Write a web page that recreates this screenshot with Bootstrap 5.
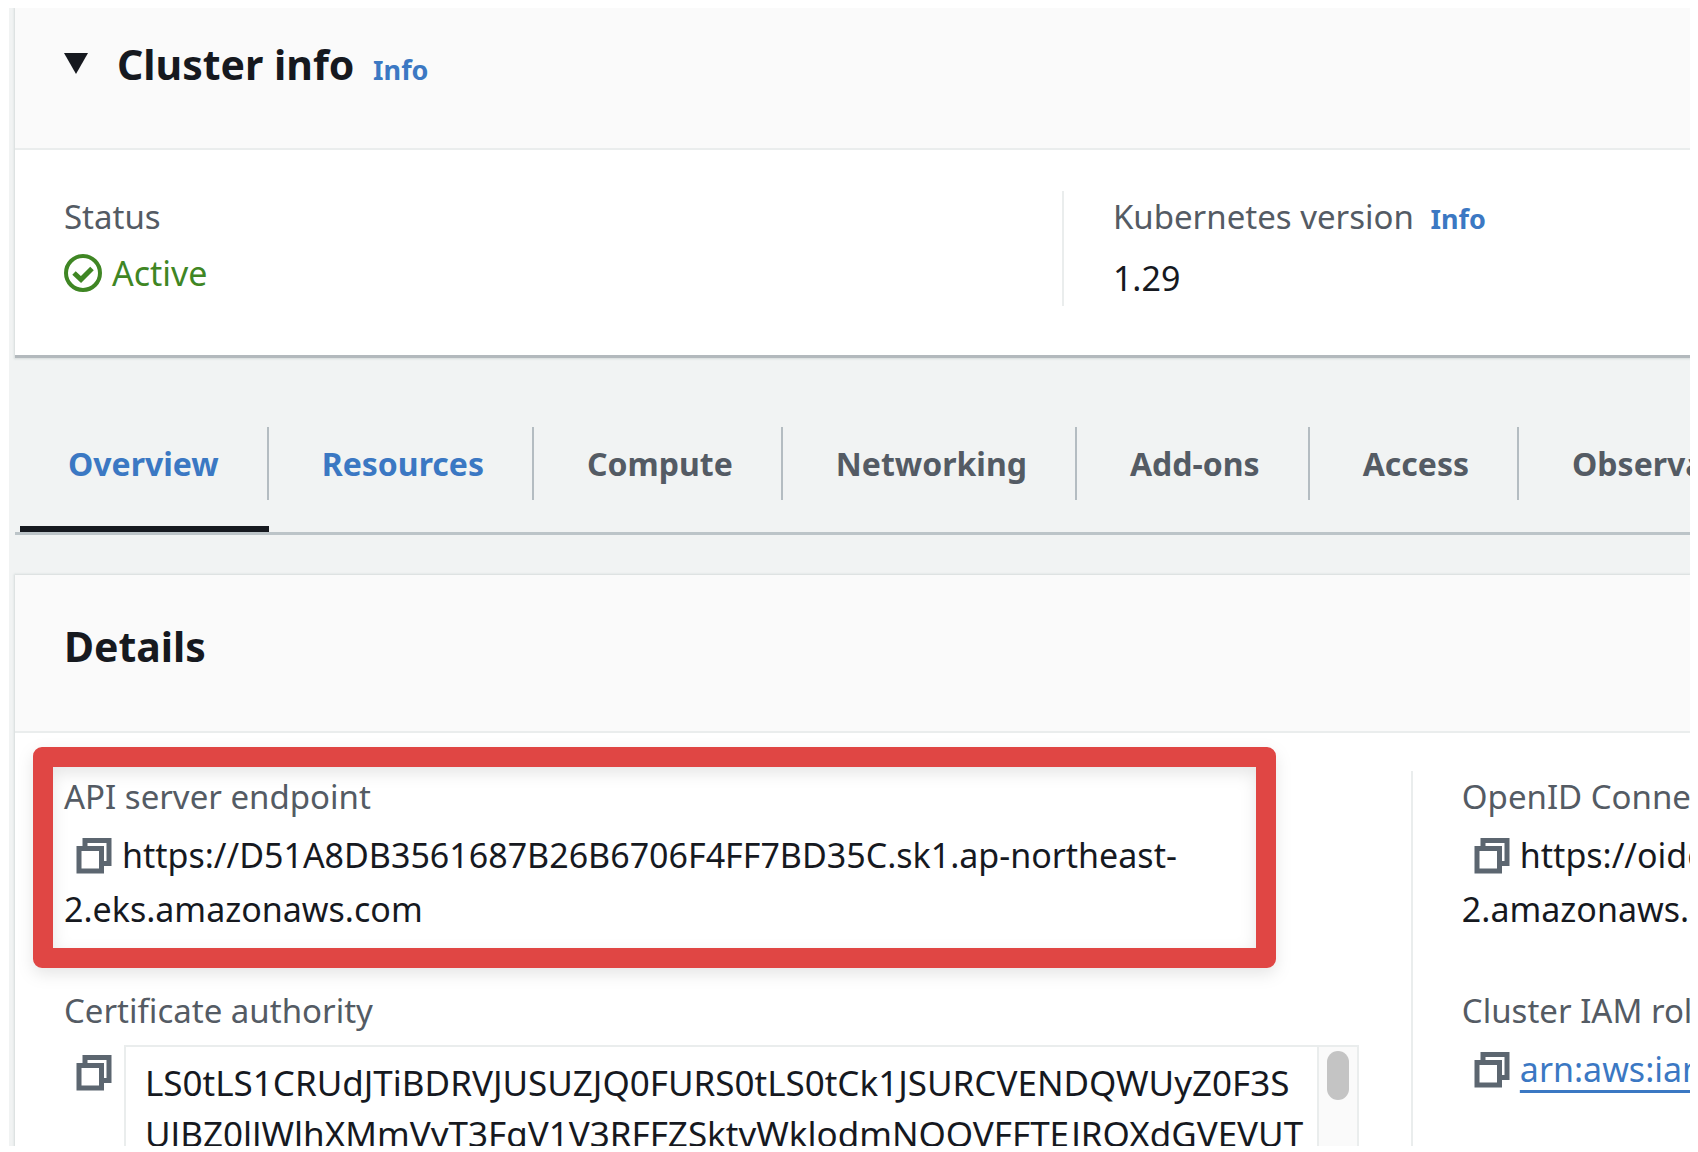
<!DOCTYPE html>
<html lang="en">
<head>
<meta charset="utf-8">
<meta name="viewport" content="width=device-width, initial-scale=1">
<title>Cluster info</title>
<link href="https://cdn.jsdelivr.net/npm/bootstrap@5.3.0/dist/css/bootstrap.min.css" rel="stylesheet">
<style>
  :root { --ink: #16191f; --muted: #545b64; --link: #3b78c3; --line: #eaeded; --ok: #3f8624; }
  body { font-family: "Noto Sans", "Open Sans", sans-serif; color: var(--ink); background: #fff; padding: 8px 8px 6px 9px; font-size: 34px; height: 100vh; overflow: hidden; }
  .console { background: #f1f3f3; height: 100%; overflow: hidden; padding-left: 6px; }
  .panel { background: #fff; box-shadow: 0 0 2px 1px #d5dbdb; }
  .panel-closed { border-bottom: 3px solid #b3b9bd; }
  .panel-head { background: #fafafa; border-bottom: 2px solid var(--line); padding: 28px 49px 56px; }
  .panel-head-lg { padding: 43px 49px 57px; }
  .panel-title { font-size: 41px; line-height: 56px; font-weight: 700; margin: 0; }
  .info-link { font-size: 27px; line-height: 1; font-weight: 700; color: var(--link); text-decoration: none; }
  .toggle { border: 0; background: none; padding: 0; width: 24px; height: 21px; line-height: 0; margin: 0 29px 2px 0; color: var(--ink); }
  .panel-body { padding: 41px 0 49px; }
  .details-body { padding: 38px 0 48px; }
  .col-status { width: 62.5%; }
  .cell { padding: 0 52px 0 49px; }
  .cell-next { border-left: 2px solid var(--line); padding-left: 49px; }
  .field-label { font-size: 33px; line-height: 52px; color: var(--muted); font-weight: 400; margin: 0; }
  .field-value { line-height: 54px; margin: 5px 0 0; white-space: nowrap; }
  .summary-value { line-height: 56px; margin: 7px 0 0; }
  .status-ok { line-height: 44px; margin: 8px 0 0; color: var(--ok); gap: 10px; }
  .tab-list { margin-top: 69px; border-bottom: 3px solid #bcc4c8; padding-left: 5px; }
  .tab-list .nav-link { font-size: 32px; line-height: 73px; font-weight: 700; padding: 0 0 26px; color: var(--muted); border-bottom: 6px solid transparent; white-space: nowrap; }
  .tab-list .nav-link span { display: block; padding: 0 48px 0 53px; border-right: 2px solid #b4bcc1; }
  .tab-list .nav-item:first-child span { padding-left: 48px; }
  .tab-list .nav-item:last-child span { border-right: 0; }
  .tab-list .nav-link.active { border-bottom-color: var(--ink); }
  .tab-list .nav-link.enabled { color: var(--link); }
  .details { margin-top: 40px; }
  .field-group { margin-bottom: 49px; }
  .callout-frame { position: absolute; top: -24px; right: 83px; bottom: -32px; left: -31px; border: 20px solid #e04644; border-radius: 9px; filter: drop-shadow(0 6px 8px rgba(0,0,0,.1)); pointer-events: none; }
  .copy-btn { border: 0; background: none; padding: 0; line-height: 0; color: #5c6670; width: 36px; height: 36px; }
  .copy-inline { margin: 0 10px 0 12px; vertical-align: 3px; }
  .copy-block { margin: 10px 12px 0 12px; }
  .cert-row { margin-top: 8px; }
  .cert-box { border: 2px solid var(--line); height: 204px; overflow: hidden; }
  .cert-text { padding: 10px 0 0 19px; font-size: 35px; line-height: 51px; white-space: nowrap; }
  .cert-track { width: 40px; background: #fafafa; border-left: 2px solid var(--line); padding: 4px 8px; }
  .cert-thumb { height: 49px; border-radius: 11px; background: #c4c4c4; }
  .arn-link { color: var(--link); text-decoration: underline; text-decoration-thickness: 3px; text-underline-offset: 8px; }
</style>
</head>
<body>
<svg class="d-none" aria-hidden="true">
  <symbol id="copy" viewBox="0 0 36 36"><path d="M9 10V2.500H33V25.500H26M3 10.500H25.500V33H3Z" fill="none" stroke="currentColor" stroke-width="5"/></symbol>
</svg>
<main class="console">
  <section class="panel panel-closed">
    <header class="panel-head d-flex align-items-center">
      <button class="toggle" type="button" aria-label="Collapse cluster info"><svg width="24" height="21" viewBox="0 0 24 21"><path d="M0 0H24L12 21Z" fill="currentColor"/></svg></button>
      <h2 class="panel-title">Cluster info <a class="info-link ms-2" href="#">Info</a></h2>
    </header>
    <div class="panel-body d-flex">
      <div class="col-status flex-shrink-0 cell">
        <h3 class="field-label">Status</h3>
        <p class="status-ok d-flex align-items-center"><svg width="38" height="38" viewBox="0 0 38 38" fill="none" stroke="currentColor" stroke-width="4"><circle cx="19" cy="19" r="17"/><path d="M10 19L17 25.500L28 14.500" stroke-width="5"/></svg>Active</p>
      </div>
      <div class="cell cell-next flex-grow-1">
        <h3 class="field-label">Kubernetes version <a class="info-link ms-2" href="#">Info</a></h3>
        <p class="summary-value">1.29</p>
      </div>
    </div>
  </section>

  <ul class="nav flex-nowrap tab-list">
    <li class="nav-item"><a class="nav-link enabled active" href="#" aria-current="page"><span>Overview</span></a></li>
    <li class="nav-item"><a class="nav-link enabled" href="#"><span>Resources</span></a></li>
    <li class="nav-item"><a class="nav-link" href="#"><span>Compute</span></a></li>
    <li class="nav-item"><a class="nav-link" href="#"><span>Networking</span></a></li>
    <li class="nav-item"><a class="nav-link" href="#"><span>Add-ons</span></a></li>
    <li class="nav-item"><a class="nav-link" href="#"><span>Access</span></a></li>
    <li class="nav-item"><a class="nav-link" href="#"><span>Observability</span></a></li>
  </ul>

  <section class="panel details">
    <header class="panel-head panel-head-lg"><h2 class="panel-title">Details</h2></header>
    <div class="details-body d-flex">
      <div class="col-10 flex-shrink-0 cell">
        <div class="field-group position-relative">
          <h3 class="field-label">API server endpoint</h3>
          <p class="field-value"><button class="copy-btn copy-inline" type="button" aria-label="Copy API server endpoint"><svg width="36" height="36"><use href="#copy"/></svg></button>https://D51A8DB3561687B26B6706F4FF7BD35C.sk1.ap-northeast-<br>2.eks.amazonaws.com</p>
          <div class="callout-frame"></div>
        </div>
        <div class="field-group">
          <h3 class="field-label">Certificate authority</h3>
          <div class="cert-row d-flex align-items-start">
            <button class="copy-btn copy-block flex-shrink-0" type="button" aria-label="Copy certificate authority"><svg width="36" height="36"><use href="#copy"/></svg></button>
            <div class="cert-box d-flex flex-grow-1">
              <div class="cert-text flex-grow-1">LS0tLS1CRUdJTiBDRVJUSUZJQ0FURS0tLS0tCk1JSURCVENDQWUyZ0F3S<br>UJBZ0lJWlhXMmVyT3FqV1V3RFFZSktvWklodmNOQVFFTEJRQXdGVEVUT</div>
              <div class="cert-track flex-shrink-0"><div class="cert-thumb"></div></div>
            </div>
          </div>
        </div>
      </div>
      <div class="cell cell-next">
        <div class="field-group">
          <h3 class="field-label text-nowrap">OpenID Connect provider URL</h3>
          <p class="field-value"><button class="copy-btn copy-inline" type="button" aria-label="Copy OpenID Connect provider URL"><svg width="36" height="36"><use href="#copy"/></svg></button>https://oidc.eks.ap-northeast-<br>2.amazonaws.com</p>
        </div>
        <div class="field-group">
          <h3 class="field-label text-nowrap">Cluster IAM role ARN</h3>
          <p class="field-value"><button class="copy-btn copy-inline" type="button" aria-label="Copy cluster IAM role ARN"><svg width="36" height="36"><use href="#copy"/></svg></button><a class="arn-link" href="#">arn:aws:iam</a></p>
        </div>
      </div>
    </div>
  </section>
</main>
<script src="https://cdn.jsdelivr.net/npm/bootstrap@5.3.0/dist/js/bootstrap.bundle.min.js"></script>
</body>
</html>
